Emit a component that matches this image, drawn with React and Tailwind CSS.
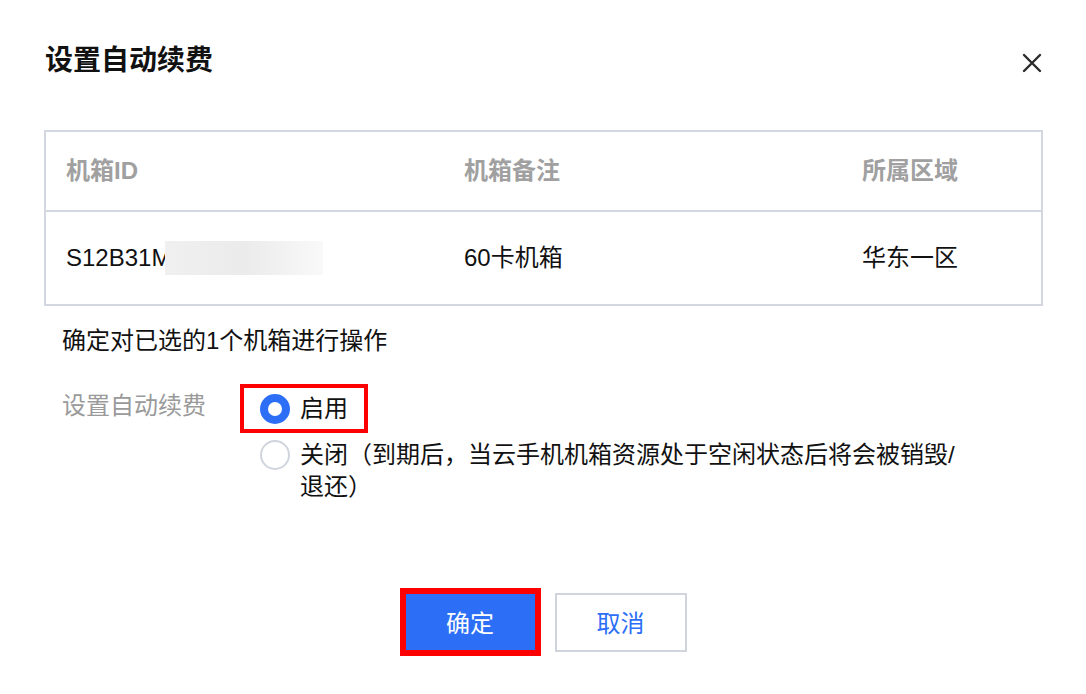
import React from "react";

const FONT = "font-['Liberation_Sans','Noto_Sans_CJK_SC',sans-serif]";

const CloseIcon = () => (
  <svg width="20" height="20" viewBox="0 0 20 20" fill="none">
    <path d="M2 2 L18 18 M18 2 L2 18" stroke="#2b2b2b" strokeWidth="2.4" strokeLinecap="round" />
  </svg>
);

const App = () => {
  return (
    <div className={`w-[1086px] h-[694px] bg-white overflow-hidden ${FONT}`}>
      {/* header */}
      <div className="flex items-center justify-between pl-[45px] pr-[44px] pt-[42px] h-[80px]">
        <h1 className="text-[28px] leading-[38px] font-bold text-[#111]">设置自动续费</h1>
        <button className="mt-1">
          <CloseIcon />
        </button>
      </div>

      {/* table */}
      <div className="ml-[44px] mt-[50px] w-[999px] border-2 border-[#d3d8e0]">
        <div className="grid grid-cols-[398px_398px_1fr] h-[80px] items-center border-b-2 border-[#d3d8e0] text-[24px] font-semibold text-[#a0a0a0]">
          <div className="pl-[20px]">机箱ID</div>
          <div className="pl-[20px]">机箱备注</div>
          <div className="pl-[20px]">所属区域</div>
        </div>
        <div className="grid grid-cols-[398px_398px_1fr] h-[92px] items-center text-[24px] text-[#111]">
          <div className="pl-[20px] flex items-center">
            <span>S12B31M</span>
            <span className="inline-block w-[158px] h-[34px] -ml-[6px] bg-linear-to-r from-[#f0f0f0] via-[#ebebeb] to-[#f9f9f9]" />
          </div>
          <div className="pl-[20px]">60卡机箱</div>
          <div className="pl-[20px]">华东一区</div>
        </div>
      </div>

      <p className="pl-[62px] mt-[19px] text-[24px] leading-[32px] text-[#111]">确定对已选的1个机箱进行操作</p>

      {/* form */}
      <div className="flex mt-[27px]">
        <div className="w-[240px] pl-[62px] pt-[6px] text-[24px] leading-[32px] text-[#9a9a9a] shrink-0">
          设置自动续费
        </div>
        <div className="flex flex-col">
          <label className="flex items-center w-[128px] h-[49px] border-4 border-[#ff0000] pl-[16px] gap-[10px]">
            <span className="w-[30px] h-[30px] rounded-full border-[8px] border-[#2c6ff6] bg-white shrink-0" />
            <span className="text-[24px] leading-[32px] text-[#111]">启用</span>
          </label>
          <label className="flex items-start mt-[6px] pl-[20px] gap-[10px]">
            <span className="w-[30px] h-[30px] mt-[1px] rounded-full border-2 border-[#d0d5dd] bg-white shrink-0" />
            <span className="w-[665px] text-[24px] leading-[32px] text-[#111]">
              关闭（到期后，当云手机机箱资源处于空闲状态后将会被销毁/退还）
            </span>
          </label>
        </div>
      </div>

      {/* footer */}
      <div className="flex justify-center items-center gap-[14px] mt-[85px]">
        <div className="w-[141px] h-[68px] border-[6px] border-[#ff0000]">
          <button className="w-full h-full pt-[3px] bg-[#2c6ff6] text-white text-[24px]">确定</button>
        </div>
        <button className="w-[132px] h-[59px] pt-[3px] border-2 border-[#d0d5dd] bg-white text-[#2c6ff6] text-[24px]">
          取消
        </button>
      </div>
    </div>
  );
};

export default App;
